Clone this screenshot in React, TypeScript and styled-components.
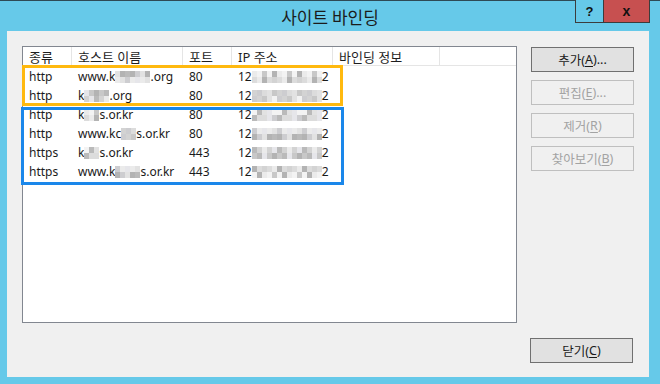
import React from "react";
import styled, { createGlobalStyle } from "styled-components";

const Global = createGlobalStyle`
  html, body { margin: 0; padding: 0; background: #66c9e9; }
  body { width: 660px; height: 384px; overflow: hidden; }
  * { box-sizing: border-box; }
`;

const FONT = `"Noto Sans", "Noto Sans CJK KR", sans-serif`;

const Window = styled.div`
  width: 660px;
  height: 384px;
  background: #66c9e9;
  border-top: 1px solid #2e4a55;
  display: flex;
  flex-direction: column;
  padding: 0 11px 7px 7px;
  font-family: ${FONT};
  color: #1a1a1a;
`;

const TitleBar = styled.div`
  position: relative;
  height: 30px;
  display: flex;
  align-items: center;
  justify-content: center;
  padding-left: 4px;
`;

const Title = styled.div`
  font-family: "Noto Sans CJK KR", sans-serif;
  font-size: 17px;
  color: #1b1b1b;
  margin-top: 1px;
`;

const Controls = styled.div`
  position: absolute;
  top: -1px;
  right: -1px;
  display: flex;
  border: 1px solid #3c3c3c;
  border-top: none;
  height: 23px;
`;

const CtrlBtn = styled.div<{ $close?: boolean }>`
  width: ${(p) => (p.$close ? "46px" : "27px")};
  height: 100%;
  background: ${(p) => (p.$close ? "#c75050" : "#66c9e9")};
  border-left: ${(p) => (p.$close ? "1px solid #3c3c3c" : "none")};
  display: flex;
  align-items: center;
  justify-content: center;
  font-family: "Liberation Sans", sans-serif;
  font-weight: bold;
  font-size: ${(p) => (p.$close ? "14px" : "13px")};
  color: #111;
`;

const Client = styled.div`
  flex: 1;
  background: #f0f0f0;
  display: flex;
  flex-direction: column;
  padding: 15px 15px 14px 15px;
`;

const Main = styled.div`
  display: flex;
  gap: 14px;
  height: 277px;
`;

const ListView = styled.div`
  position: relative;
  width: 495px;
  height: 100%;
  background: #fff;
  border: 1px solid #828790;
  font-size: 12px;
`;

const HeaderRow = styled.div`
  display: flex;
  height: 19px;
  border-bottom: 1px solid #e5e5e5;
`;

const HeaderCell = styled.div<{ $w: number }>`
  width: ${(p) => p.$w}px;
  flex: none;
  padding-left: 6px;
  border-right: 1px solid #e5e5e5;
  display: flex;
  align-items: center;
  font-family: "Noto Sans", "Noto Sans CJK KR", sans-serif;
  font-size: 13px;
  color: #1e1e1e;
  white-space: nowrap;
  overflow: hidden;
`;

const Body = styled.div`
  padding-top: 1px;
`;

const Row = styled.div`
  display: flex;
  height: 19px;
  align-items: center;
`;

const Cell = styled.div<{ $w: number }>`
  width: ${(p) => p.$w}px;
  flex: none;
  padding-left: 6px;
  display: flex;
  align-items: center;
  white-space: nowrap;
  color: #1a1a1a;
`;

const Mosaic = styled.span`
  display: inline-grid;
  grid-auto-flow: column;
  grid-template-rows: 6px 6px;
  height: 12px;
  vertical-align: middle;
`;

const MosaicCell = styled.span<{ $c: string }>`
  width: 5px;
  height: 6px;
  background: ${(p) => p.$c};
`;

const Highlight = styled.div<{ $color: string; $top: number; $h: number; $l: number; $w: number }>`
  position: absolute;
  top: ${(p) => p.$top}px;
  left: ${(p) => p.$l}px;
  width: ${(p) => p.$w}px;
  height: ${(p) => p.$h}px;
  border: 3px solid ${(p) => p.$color};
  pointer-events: none;
`;

const ButtonCol = styled.div`
  display: flex;
  flex-direction: column;
  gap: 8px;
  padding-top: 1px;
`;

const Button = styled.div<{ $disabled?: boolean }>`
  width: 103px;
  height: 25px;
  display: flex;
  align-items: center;
  justify-content: center;
  font-family: "Noto Sans", "Noto Sans CJK KR", sans-serif;
  font-size: 12.5px;
  background: ${(p) => (p.$disabled ? "#f0f0f0" : "#e1e1e1")};
  border: 1px solid ${(p) => (p.$disabled ? "#bfbfbf" : "#707070")};
  color: ${(p) => (p.$disabled ? "#a3a3a3" : "#1a1a1a")};
`;

const Footer = styled.div`
  display: flex;
  justify-content: flex-end;
  margin-top: 15px;
  padding-right: 1px;
`;

const U = styled.span`
  text-decoration: underline;
  text-underline-offset: 2px;
`;

const shades = ["#dcdcdc", "#c8c8c8", "#ebebeb", "#bababa", "#e2e2e2", "#f3f3f3", "#d3d3d3", "#b3b3b3", "#e6e6ea", "#cdcdd0"];

function Blur({ cols, seed }: { cols: number; seed: number }) {
  const cells: string[] = [];
  for (let i = 0; i < cols * 2; i++) {
    const v = (i * 7 + seed * 13 + ((i * i + seed) % 5)) % shades.length;
    cells.push(shades[v]);
  }
  return (
    <Mosaic>
      {cells.map((c, i) => (
        <MosaicCell key={i} $c={c} />
      ))}
    </Mosaic>
  );
}

const W = [49, 111, 49, 101, 107];

type Bind = { type: string; pre: string; blur: number; post: string; port: string };
const rows: Bind[] = [
  { type: "http", pre: "www.k", blur: 7, post: ".org", port: "80" },
  { type: "http", pre: "k", blur: 5, post: ".org", port: "80" },
  { type: "http", pre: "k", blur: 3, post: "s.or.kr", port: "80" },
  { type: "http", pre: "www.kc", blur: 3, post: "s.or.kr", port: "80" },
  { type: "https", pre: "k", blur: 3, post: "s.or.kr", port: "443" },
  { type: "https", pre: "www.k", blur: 5, post: "s.or.kr", port: "443" },
];

export default function App() {
  return (
    <>
      <Global />
      <Window>
        <TitleBar>
          <Title>사이트 바인딩</Title>
          <Controls>
            <CtrlBtn>?</CtrlBtn>
            <CtrlBtn $close>x</CtrlBtn>
          </Controls>
        </TitleBar>
        <Client>
          <Main>
            <ListView>
              <HeaderRow>
                <HeaderCell $w={W[0]}>종류</HeaderCell>
                <HeaderCell $w={W[1]}>호스트 이름</HeaderCell>
                <HeaderCell $w={W[2]}>포트</HeaderCell>
                <HeaderCell $w={W[3]}>IP 주소</HeaderCell>
                <HeaderCell $w={W[4]}>바인딩 정보</HeaderCell>
              </HeaderRow>
              <Body>
                {rows.map((r, i) => (
                  <Row key={i}>
                    <Cell $w={W[0]}>{r.type}</Cell>
                    <Cell $w={W[1]}>
                      {r.pre}
                      <Blur cols={r.blur} seed={i + 1} />
                      {r.post}
                    </Cell>
                    <Cell $w={W[2]}>{r.port}</Cell>
                    <Cell $w={W[3]}>
                      12
                      <Blur cols={14} seed={i + 3} />2
                    </Cell>
                  </Row>
                ))}
              </Body>
              <Highlight $color="#ffb90f" $l={-1} $top={18} $w={321} $h={41} />
              <Highlight $color="#1a87ea" $l={-2} $top={60} $w={323} $h={78} />
            </ListView>
            <ButtonCol>
              <Button>
                추가(<U>A</U>)...
              </Button>
              <Button $disabled>
                편집(<U>E</U>)...
              </Button>
              <Button $disabled>
                제거(<U>R</U>)
              </Button>
              <Button $disabled>
                찾아보기(<U>B</U>)
              </Button>
            </ButtonCol>
          </Main>
          <Footer>
            <Button>
              닫기(<U>C</U>)
            </Button>
          </Footer>
        </Client>
      </Window>
    </>
  );
}
